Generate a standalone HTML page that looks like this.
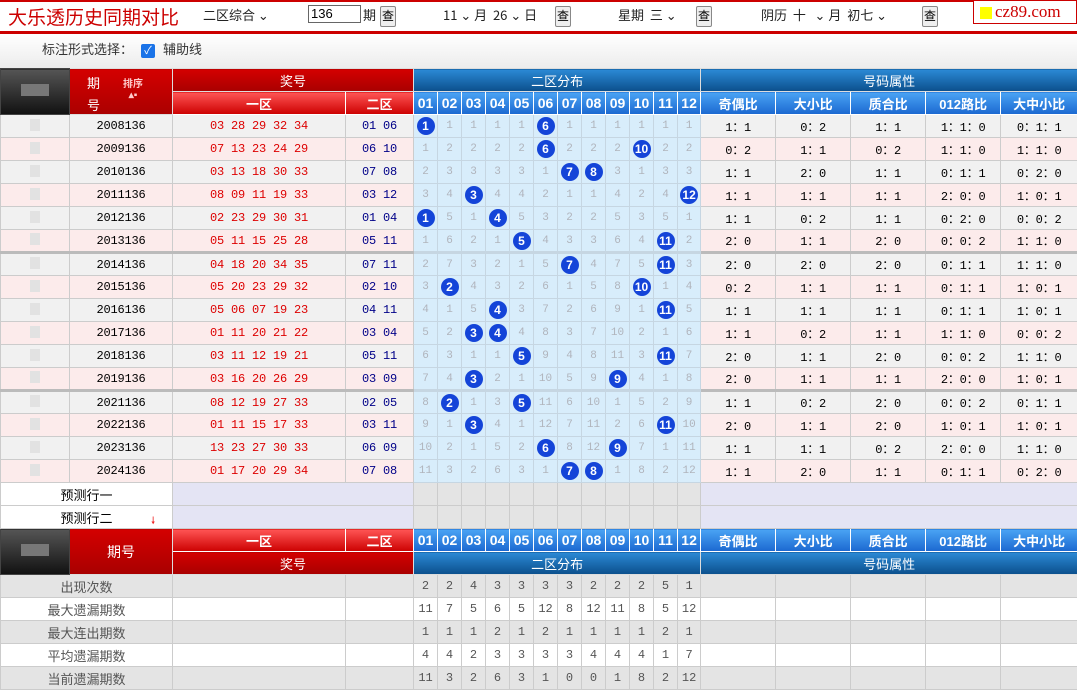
<!DOCTYPE html>
<html><head><meta charset="utf-8"><style>
*{margin:0;padding:0;box-sizing:border-box}
body{width:1077px;height:693px;overflow:hidden;background:#fff;font-family:"Liberation Sans","Noto Sans CJK SC",sans-serif;position:relative}
.top{position:absolute;left:0;top:0;width:1077px;height:34px;border-top:2px solid #c00;border-bottom:3px solid #c00;background:#fff}
.title{position:absolute;left:8px;top:2px;font-size:19px;line-height:26px;color:#c00;font-family:"Noto Sans CJK SC",sans-serif}
.t{position:absolute;top:3px;font-size:13px;line-height:20px;color:#222;font-family:"Noto Sans CJK SC",sans-serif}
.btn{position:absolute;top:4px;width:16px;height:21px;border:1px solid #888;background:#eee;font-size:12px;line-height:19px;text-align:center;border-radius:2px}
.inp{position:absolute;left:308px;top:3px;width:53px;height:18px;border:1px solid #666;font-size:13px;padding-left:2px;line-height:16px}
.logo{position:absolute;left:973px;top:-2px;width:104px;height:24px;border:1px solid #c00;background:#fff}
.logo i{position:absolute;left:6px;top:6px;width:12px;height:12px;background:#ff0}
.logo span{position:absolute;left:21px;top:1px;font-family:"Liberation Serif",serif;font-size:17px;color:#c00}
.bar2{position:absolute;left:0;top:34px;width:1077px;height:34px;background:linear-gradient(#fff,#ececec)}
table{position:absolute;left:0;top:68px;border-collapse:collapse;table-layout:fixed;width:1077px}
td{height:23px;border:1px solid #ccc;text-align:center;font-size:12px;padding:0;overflow:hidden;white-space:nowrap}
.m{font-family:"Liberation Mono",monospace;letter-spacing:-0.2px}
.lb{background:linear-gradient(#555,#111);border-color:#444}
.r1{background:linear-gradient(#d40000,#a80000);color:#fff;font-size:13px;border-color:#ddd}
.r2{background:linear-gradient(#f55,#c00);color:#fff;font-size:13px;font-weight:bold;border-color:#fff}
.b1{background:linear-gradient(#2b8ad6,#0b4f8c);color:#fff;font-size:13px;border-color:#ddd}
.b2{background:linear-gradient(#4aa4f4,#1b68d0);color:#fff;font-size:13px;font-weight:bold;border-color:#fff}
.b2n{background:linear-gradient(#4aa4f4,#1b68d0);color:#fff;font-size:14px;font-weight:bold;border-color:#fff;font-family:"Liberation Sans",sans-serif}
tr.a td{background:#f1f1f1}
tr.p td{background:#fcebeb}
tr.a td.g,tr.p td.g{background:#d8edfb;color:#b0b4bc;font-size:11px;font-family:"Liberation Mono",monospace;border-color:#c6d6e2}
.red{color:#d00}.blue{color:#008}
b.o{display:inline-block;width:18px;height:18px;border-radius:50%;background:#1444d8;color:#fff;font-size:12px;line-height:18px;font-family:"Liberation Sans",sans-serif;vertical-align:middle}
tr.sep td{border-top:3px solid #bbb}
.lg{display:inline-block;width:10px;height:12px;background:#e2e2e2}
tr.pr td{background:#fff}
tr.pr td.lv{background:#e4e4f4}
tr.pr td.gr{background:#e4e4e4}
tr.s1 td{background:#e4e4e4;color:#555}
tr.s2 td{background:#fff;color:#555}
tr.s1 td.n,tr.s2 td.n{font-family:"Liberation Mono",monospace;font-size:12px}
.lbl{font-family:"Noto Sans CJK SC",sans-serif;font-size:13px}
.lb .lg{width:28px;background:#777}
</style></head><body>
<div class="top">
<div class="title">大乐透历史同期对比</div>
<div class="t" style="left:203px">二区综合 ⌄</div>
<div class="inp">136</div>
<div class="t" style="left:363px">期</div>
<div class="btn" style="left:380px">查</div>
<div class="t" style="left:443px">11 ⌄ 月 &nbsp;26 ⌄ 日</div>
<div class="btn" style="left:555px">查</div>
<div class="t" style="left:618px">星期 &nbsp;三 ⌄</div>
<div class="btn" style="left:696px">查</div>
<div class="t" style="left:761px">阴历 &nbsp;十 &nbsp; ⌄ 月 &nbsp;初七 ⌄</div>
<div class="btn" style="left:922px">查</div>
<div class="logo"><i></i><span>cz89.com</span></div>
</div>
<div class="bar2"><div class="t" style="left:42px;top:5px;color:#333">标注形式选择：</div>
<div style="position:absolute;left:141px;top:10px;width:14px;height:14px;background:#1a73e8;border-radius:2px;color:#fff;font-size:11px;line-height:14px;text-align:center">✓</div>
<div class="t" style="left:163px;top:5px;color:#333">辅助线</div></div>
<table>
<colgroup><col style="width:69px"><col style="width:103px"><col style="width:173px"><col style="width:68px">
<col style="width:24px"><col style="width:24px"><col style="width:24px"><col style="width:24px"><col style="width:24px"><col style="width:24px"><col style="width:24px"><col style="width:24px"><col style="width:24px"><col style="width:24px"><col style="width:24px"><col style="width:23px">
<col style="width:75px"><col style="width:75px"><col style="width:75px"><col style="width:75px"><col style="width:77px"></colgroup>
<tr style="height:22px"><td class="lb" rowspan="2"><span class="lg"></span></td>
<td class="r1" rowspan="2" style="background:linear-gradient(#d40000,#a00)"><div style="position:relative;height:44px"><span style="position:absolute;left:17px;top:3px">期</span><span style="position:absolute;left:17px;top:25px">号</span><span style="position:absolute;left:53px;top:5px;font-size:10px;font-weight:bold;color:#fcc">排序<br>▴▪</span></div></td>
<td class="r1" colspan="2">奖号</td><td class="b1" colspan="12">二区分布</td><td class="b1" colspan="5">号码属性</td></tr>
<tr><td class="r2">一区</td><td class="r2">二区</td>
<td class="b2n">01</td><td class="b2n">02</td><td class="b2n">03</td><td class="b2n">04</td><td class="b2n">05</td><td class="b2n">06</td><td class="b2n">07</td><td class="b2n">08</td><td class="b2n">09</td><td class="b2n">10</td><td class="b2n">11</td><td class="b2n">12</td>
<td class="b2">奇偶比</td><td class="b2">大小比</td><td class="b2">质合比</td><td class="b2">012路比</td><td class="b2">大中小比</td></tr>

<tr class="a"><td><span class="lg"></span></td><td class="m">2008136</td><td class="m red">03 28 29 32 34</td><td class="m blue">01 06</td><td class="g"><b class="o">1</b></td><td class="g">1</td><td class="g">1</td><td class="g">1</td><td class="g">1</td><td class="g"><b class="o">6</b></td><td class="g">1</td><td class="g">1</td><td class="g">1</td><td class="g">1</td><td class="g">1</td><td class="g">1</td><td class="m">1：1</td><td class="m">0：2</td><td class="m">1：1</td><td class="m">1：1：0</td><td class="m">0：1：1</td></tr>
<tr class="p"><td><span class="lg"></span></td><td class="m">2009136</td><td class="m red">07 13 23 24 29</td><td class="m blue">06 10</td><td class="g">1</td><td class="g">2</td><td class="g">2</td><td class="g">2</td><td class="g">2</td><td class="g"><b class="o">6</b></td><td class="g">2</td><td class="g">2</td><td class="g">2</td><td class="g"><b class="o">10</b></td><td class="g">2</td><td class="g">2</td><td class="m">0：2</td><td class="m">1：1</td><td class="m">0：2</td><td class="m">1：1：0</td><td class="m">1：1：0</td></tr>
<tr class="a"><td><span class="lg"></span></td><td class="m">2010136</td><td class="m red">03 13 18 30 33</td><td class="m blue">07 08</td><td class="g">2</td><td class="g">3</td><td class="g">3</td><td class="g">3</td><td class="g">3</td><td class="g">1</td><td class="g"><b class="o">7</b></td><td class="g"><b class="o">8</b></td><td class="g">3</td><td class="g">1</td><td class="g">3</td><td class="g">3</td><td class="m">1：1</td><td class="m">2：0</td><td class="m">1：1</td><td class="m">0：1：1</td><td class="m">0：2：0</td></tr>
<tr class="p"><td><span class="lg"></span></td><td class="m">2011136</td><td class="m red">08 09 11 19 33</td><td class="m blue">03 12</td><td class="g">3</td><td class="g">4</td><td class="g"><b class="o">3</b></td><td class="g">4</td><td class="g">4</td><td class="g">2</td><td class="g">1</td><td class="g">1</td><td class="g">4</td><td class="g">2</td><td class="g">4</td><td class="g"><b class="o">12</b></td><td class="m">1：1</td><td class="m">1：1</td><td class="m">1：1</td><td class="m">2：0：0</td><td class="m">1：0：1</td></tr>
<tr class="a"><td><span class="lg"></span></td><td class="m">2012136</td><td class="m red">02 23 29 30 31</td><td class="m blue">01 04</td><td class="g"><b class="o">1</b></td><td class="g">5</td><td class="g">1</td><td class="g"><b class="o">4</b></td><td class="g">5</td><td class="g">3</td><td class="g">2</td><td class="g">2</td><td class="g">5</td><td class="g">3</td><td class="g">5</td><td class="g">1</td><td class="m">1：1</td><td class="m">0：2</td><td class="m">1：1</td><td class="m">0：2：0</td><td class="m">0：0：2</td></tr>
<tr class="p"><td><span class="lg"></span></td><td class="m">2013136</td><td class="m red">05 11 15 25 28</td><td class="m blue">05 11</td><td class="g">1</td><td class="g">6</td><td class="g">2</td><td class="g">1</td><td class="g"><b class="o">5</b></td><td class="g">4</td><td class="g">3</td><td class="g">3</td><td class="g">6</td><td class="g">4</td><td class="g"><b class="o">11</b></td><td class="g">2</td><td class="m">2：0</td><td class="m">1：1</td><td class="m">2：0</td><td class="m">0：0：2</td><td class="m">1：1：0</td></tr>

<tr class="a sep"><td><span class="lg"></span></td><td class="m">2014136</td><td class="m red">04 18 20 34 35</td><td class="m blue">07 11</td><td class="g">2</td><td class="g">7</td><td class="g">3</td><td class="g">2</td><td class="g">1</td><td class="g">5</td><td class="g"><b class="o">7</b></td><td class="g">4</td><td class="g">7</td><td class="g">5</td><td class="g"><b class="o">11</b></td><td class="g">3</td><td class="m">2：0</td><td class="m">2：0</td><td class="m">2：0</td><td class="m">0：1：1</td><td class="m">1：1：0</td></tr>
<tr class="p"><td><span class="lg"></span></td><td class="m">2015136</td><td class="m red">05 20 23 29 32</td><td class="m blue">02 10</td><td class="g">3</td><td class="g"><b class="o">2</b></td><td class="g">4</td><td class="g">3</td><td class="g">2</td><td class="g">6</td><td class="g">1</td><td class="g">5</td><td class="g">8</td><td class="g"><b class="o">10</b></td><td class="g">1</td><td class="g">4</td><td class="m">0：2</td><td class="m">1：1</td><td class="m">1：1</td><td class="m">0：1：1</td><td class="m">1：0：1</td></tr>
<tr class="a"><td><span class="lg"></span></td><td class="m">2016136</td><td class="m red">05 06 07 19 23</td><td class="m blue">04 11</td><td class="g">4</td><td class="g">1</td><td class="g">5</td><td class="g"><b class="o">4</b></td><td class="g">3</td><td class="g">7</td><td class="g">2</td><td class="g">6</td><td class="g">9</td><td class="g">1</td><td class="g"><b class="o">11</b></td><td class="g">5</td><td class="m">1：1</td><td class="m">1：1</td><td class="m">1：1</td><td class="m">0：1：1</td><td class="m">1：0：1</td></tr>
<tr class="p"><td><span class="lg"></span></td><td class="m">2017136</td><td class="m red">01 11 20 21 22</td><td class="m blue">03 04</td><td class="g">5</td><td class="g">2</td><td class="g"><b class="o">3</b></td><td class="g"><b class="o">4</b></td><td class="g">4</td><td class="g">8</td><td class="g">3</td><td class="g">7</td><td class="g">10</td><td class="g">2</td><td class="g">1</td><td class="g">6</td><td class="m">1：1</td><td class="m">0：2</td><td class="m">1：1</td><td class="m">1：1：0</td><td class="m">0：0：2</td></tr>
<tr class="a"><td><span class="lg"></span></td><td class="m">2018136</td><td class="m red">03 11 12 19 21</td><td class="m blue">05 11</td><td class="g">6</td><td class="g">3</td><td class="g">1</td><td class="g">1</td><td class="g"><b class="o">5</b></td><td class="g">9</td><td class="g">4</td><td class="g">8</td><td class="g">11</td><td class="g">3</td><td class="g"><b class="o">11</b></td><td class="g">7</td><td class="m">2：0</td><td class="m">1：1</td><td class="m">2：0</td><td class="m">0：0：2</td><td class="m">1：1：0</td></tr>
<tr class="p"><td><span class="lg"></span></td><td class="m">2019136</td><td class="m red">03 16 20 26 29</td><td class="m blue">03 09</td><td class="g">7</td><td class="g">4</td><td class="g"><b class="o">3</b></td><td class="g">2</td><td class="g">1</td><td class="g">10</td><td class="g">5</td><td class="g">9</td><td class="g"><b class="o">9</b></td><td class="g">4</td><td class="g">1</td><td class="g">8</td><td class="m">2：0</td><td class="m">1：1</td><td class="m">1：1</td><td class="m">2：0：0</td><td class="m">1：0：1</td></tr>

<tr class="a sep"><td><span class="lg"></span></td><td class="m">2021136</td><td class="m red">08 12 19 27 33</td><td class="m blue">02 05</td><td class="g">8</td><td class="g"><b class="o">2</b></td><td class="g">1</td><td class="g">3</td><td class="g"><b class="o">5</b></td><td class="g">11</td><td class="g">6</td><td class="g">10</td><td class="g">1</td><td class="g">5</td><td class="g">2</td><td class="g">9</td><td class="m">1：1</td><td class="m">0：2</td><td class="m">2：0</td><td class="m">0：0：2</td><td class="m">0：1：1</td></tr>
<tr class="p"><td><span class="lg"></span></td><td class="m">2022136</td><td class="m red">01 11 15 17 33</td><td class="m blue">03 11</td><td class="g">9</td><td class="g">1</td><td class="g"><b class="o">3</b></td><td class="g">4</td><td class="g">1</td><td class="g">12</td><td class="g">7</td><td class="g">11</td><td class="g">2</td><td class="g">6</td><td class="g"><b class="o">11</b></td><td class="g">10</td><td class="m">2：0</td><td class="m">1：1</td><td class="m">2：0</td><td class="m">1：0：1</td><td class="m">1：0：1</td></tr>
<tr class="a"><td><span class="lg"></span></td><td class="m">2023136</td><td class="m red">13 23 27 30 33</td><td class="m blue">06 09</td><td class="g">10</td><td class="g">2</td><td class="g">1</td><td class="g">5</td><td class="g">2</td><td class="g"><b class="o">6</b></td><td class="g">8</td><td class="g">12</td><td class="g"><b class="o">9</b></td><td class="g">7</td><td class="g">1</td><td class="g">11</td><td class="m">1：1</td><td class="m">1：1</td><td class="m">0：2</td><td class="m">2：0：0</td><td class="m">1：1：0</td></tr>
<tr class="p"><td><span class="lg"></span></td><td class="m">2024136</td><td class="m red">01 17 20 29 34</td><td class="m blue">07 08</td><td class="g">11</td><td class="g">3</td><td class="g">2</td><td class="g">6</td><td class="g">3</td><td class="g">1</td><td class="g"><b class="o">7</b></td><td class="g"><b class="o">8</b></td><td class="g">1</td><td class="g">8</td><td class="g">2</td><td class="g">12</td><td class="m">1：1</td><td class="m">2：0</td><td class="m">1：1</td><td class="m">0：1：1</td><td class="m">0：2：0</td></tr>

<tr class="pr"><td colspan="2" class="lbl">预测行一</td><td colspan="2" class="lv"></td><td class="gr"></td><td class="gr"></td><td class="gr"></td><td class="gr"></td><td class="gr"></td><td class="gr"></td><td class="gr"></td><td class="gr"></td><td class="gr"></td><td class="gr"></td><td class="gr"></td><td class="gr"></td><td colspan="5" class="lv"></td></tr>
<tr class="pr"><td colspan="2" class="lbl" style="position:relative">预测行二<span style="position:absolute;left:150px;top:6px;color:#e22;font-size:10px">🠗</span></td><td colspan="2" class="lv"></td><td class="gr"></td><td class="gr"></td><td class="gr"></td><td class="gr"></td><td class="gr"></td><td class="gr"></td><td class="gr"></td><td class="gr"></td><td class="gr"></td><td class="gr"></td><td class="gr"></td><td class="gr"></td><td colspan="5" class="lv"></td></tr>

<tr><td class="lb" rowspan="2"><span class="lg"></span></td><td class="r1" rowspan="2" style="font-size:14px">期号</td><td class="r2">一区</td><td class="r2">二区</td>
<td class="b2n">01</td><td class="b2n">02</td><td class="b2n">03</td><td class="b2n">04</td><td class="b2n">05</td><td class="b2n">06</td><td class="b2n">07</td><td class="b2n">08</td><td class="b2n">09</td><td class="b2n">10</td><td class="b2n">11</td><td class="b2n">12</td>
<td class="b2">奇偶比</td><td class="b2">大小比</td><td class="b2">质合比</td><td class="b2">012路比</td><td class="b2">大中小比</td></tr>
<tr><td class="r1" colspan="2">奖号</td><td class="b1" colspan="12">二区分布</td><td class="b1" colspan="5">号码属性</td></tr>

<tr class="s1"><td colspan="2" class="lbl">出现次数</td><td></td><td></td><td class="n">2</td><td class="n">2</td><td class="n">4</td><td class="n">3</td><td class="n">3</td><td class="n">3</td><td class="n">3</td><td class="n">2</td><td class="n">2</td><td class="n">2</td><td class="n">5</td><td class="n">1</td><td></td><td></td><td></td><td></td><td></td></tr>
<tr class="s2"><td colspan="2" class="lbl">最大遗漏期数</td><td></td><td></td><td class="n">11</td><td class="n">7</td><td class="n">5</td><td class="n">6</td><td class="n">5</td><td class="n">12</td><td class="n">8</td><td class="n">12</td><td class="n">11</td><td class="n">8</td><td class="n">5</td><td class="n">12</td><td></td><td></td><td></td><td></td><td></td></tr>
<tr class="s1"><td colspan="2" class="lbl">最大连出期数</td><td></td><td></td><td class="n">1</td><td class="n">1</td><td class="n">1</td><td class="n">2</td><td class="n">1</td><td class="n">2</td><td class="n">1</td><td class="n">1</td><td class="n">1</td><td class="n">1</td><td class="n">2</td><td class="n">1</td><td></td><td></td><td></td><td></td><td></td></tr>
<tr class="s2"><td colspan="2" class="lbl">平均遗漏期数</td><td></td><td></td><td class="n">4</td><td class="n">4</td><td class="n">2</td><td class="n">3</td><td class="n">3</td><td class="n">3</td><td class="n">3</td><td class="n">4</td><td class="n">4</td><td class="n">4</td><td class="n">1</td><td class="n">7</td><td></td><td></td><td></td><td></td><td></td></tr>
<tr class="s1"><td colspan="2" class="lbl">当前遗漏期数</td><td></td><td></td><td class="n">11</td><td class="n">3</td><td class="n">2</td><td class="n">6</td><td class="n">3</td><td class="n">1</td><td class="n">0</td><td class="n">0</td><td class="n">1</td><td class="n">8</td><td class="n">2</td><td class="n">12</td><td></td><td></td><td></td><td></td><td></td></tr>
</table>
</body></html>
